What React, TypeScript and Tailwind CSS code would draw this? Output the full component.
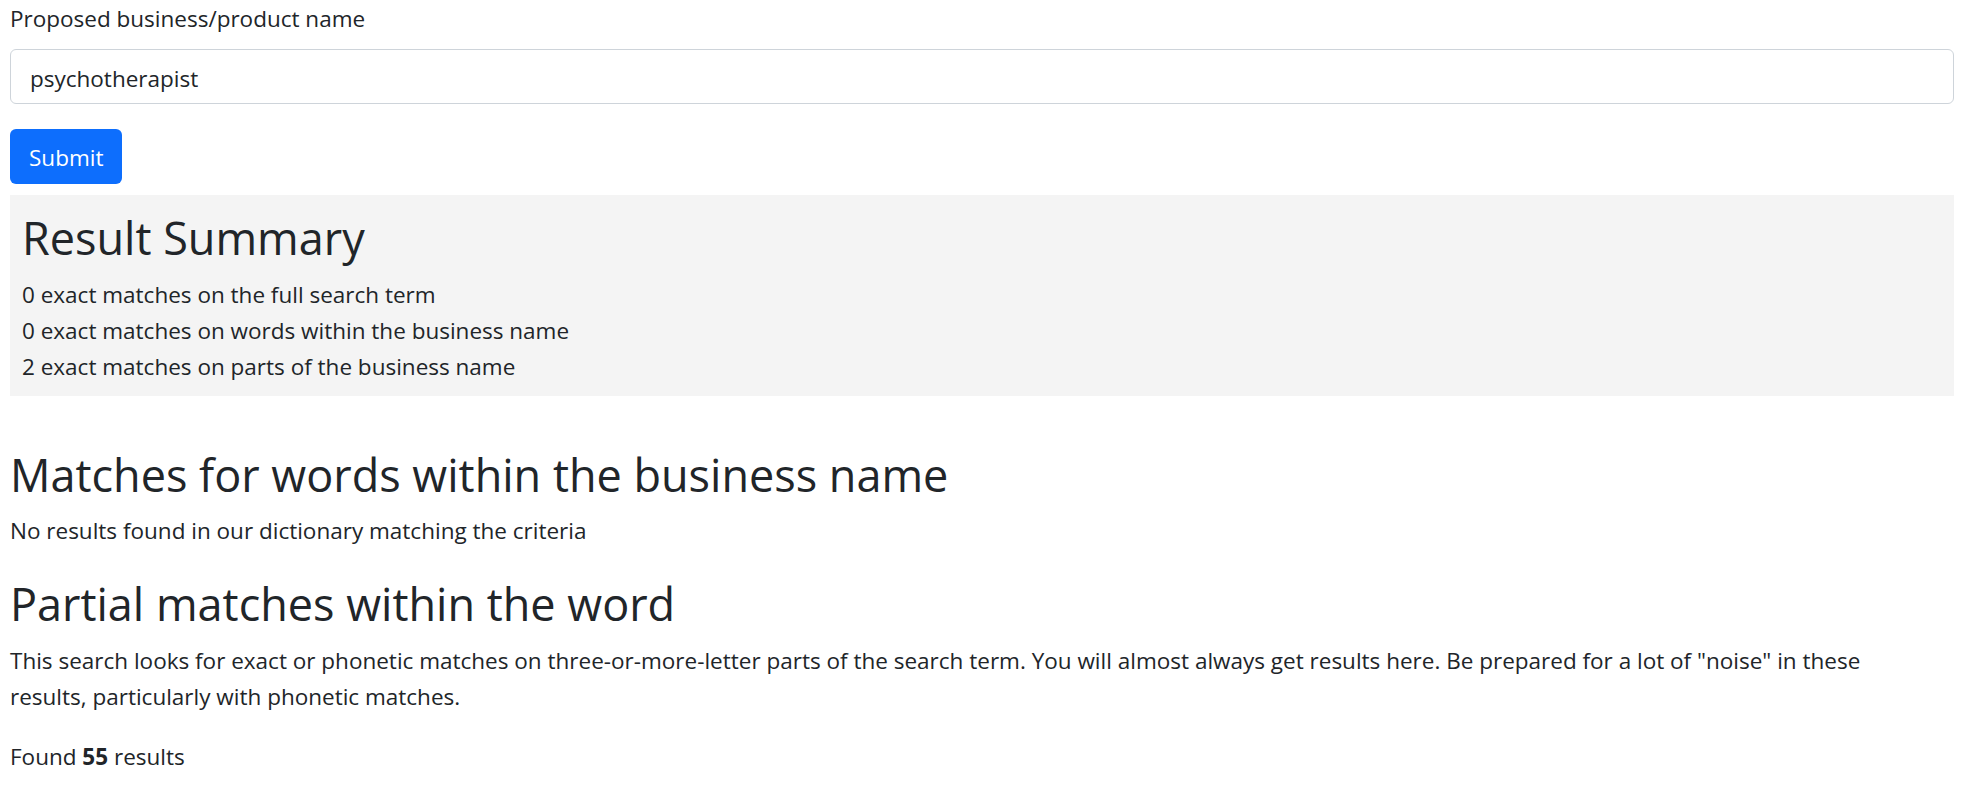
const summary = [
  "0 exact matches on the full search term",
  "0 exact matches on words within the business name",
  "2 exact matches on parts of the business name",
];

export default function App() {
  return (
    <div className="min-h-screen bg-white pl-[10px] pr-[15px] font-['Open_Sans',sans-serif] text-[22.5px] leading-[36px] text-[#212529]">
      <form>
        <label htmlFor="name" className="mb-[12px] block pt-[1px]">
          Proposed business/product name
        </label>
        <input
          id="name"
          type="text"
          defaultValue="psychotherapist"
          className="block h-[55px] w-full rounded-[6px] border border-[#ced4da] bg-white px-[19px] pt-[3px] text-[#212529] outline-none"
        />
        <button
          type="button"
          className="mt-[25px] h-[55px] rounded-[6px] bg-[#0d6efd] px-[19px] pt-[2px] text-white"
        >
          Submit
        </button>
      </form>

      <section className="mt-[11px] bg-[#f4f4f4] px-[12px] pt-[12px] pb-[11px]">
        <h2 className="mb-[10px] pt-[2px] text-[45px] leading-[57.6px]">Result Summary</h2>
        {summary.map((line) => (
          <div key={line}>{line}</div>
        ))}
      </section>

      <section className="mt-[48px]">
        <h2 className="mb-[10px] pt-[2px] text-[45px] leading-[57.6px]">
          Matches for words within the business name
        </h2>
        <p className="mb-[24px]">No results found in our dictionary matching the criteria</p>

        <h2 className="mb-[10px] pt-[2px] text-[45px] leading-[57.6px]">
          Partial matches within the word
        </h2>
        <p className="mb-[24px] max-w-[1930px]">
          This search looks for exact or phonetic matches on three-or-more-letter parts of the search
          term. You will almost always get results here. Be prepared for a lot of "noise" in these
          results, particularly with phonetic matches.
        </p>
        <p>
          Found <b className="font-bold">55</b> results
        </p>
      </section>
    </div>
  );
}
